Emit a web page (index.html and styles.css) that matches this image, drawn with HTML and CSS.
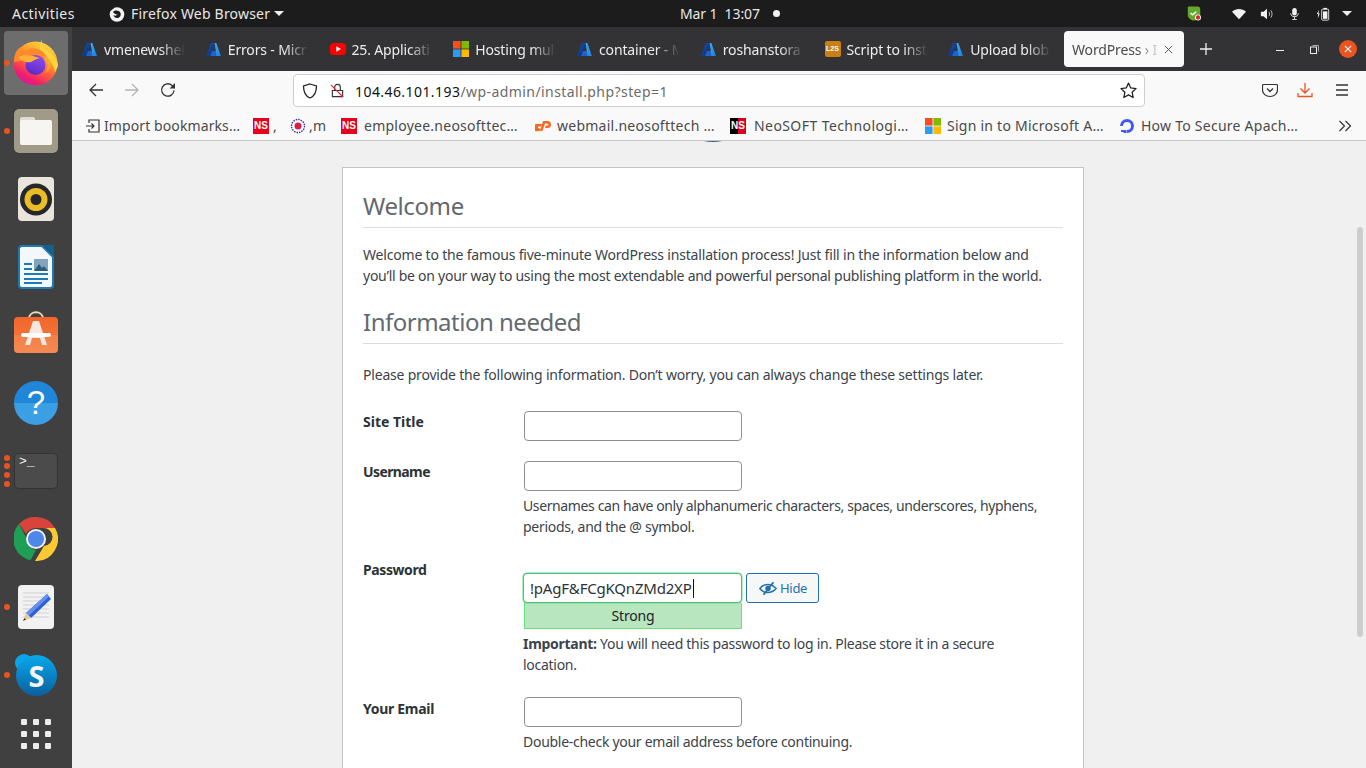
FILE: index.html
```html
<!DOCTYPE html>
<html lang="en">
<head>
<meta charset="utf-8">
<title>WordPress › Installation</title>
<link rel="stylesheet" href="styles.css">
</head>
<body>
<svg class="defs" width="0" height="0" aria-hidden="true">
  <defs>
    <linearGradient id="azg" x1="0" y1="0" x2="1" y2="1"><stop offset="0" stop-color="#1b4fa8"/><stop offset="1" stop-color="#0a2f7a"/></linearGradient>
    <linearGradient id="azh" x1="0" y1="0" x2="1" y2="1"><stop offset="0" stop-color="#3ab4f2"/><stop offset="1" stop-color="#1a7ae0"/></linearGradient>
    <symbol id="azure" viewBox="0 0 16 16">
      <path d="M5 1h5L4.600 15H0z" fill="url(#azg)"/>
      <path d="M6.400 9.600h5.600l3.600 5.400H4.400z" fill="#1f62c9"/>
      <path d="M9.200 1h1.800L16 15h-4.800z" fill="url(#azh)"/>
    </symbol>
    <symbol id="ms" viewBox="0 0 16 16">
      <rect width="7.6" height="7.6" fill="#f25022"/><rect x="8.4" width="7.6" height="7.6" fill="#7fba00"/>
      <rect y="8.4" width="7.6" height="7.6" fill="#2f9bf0"/><rect x="8.4" y="8.4" width="7.6" height="7.6" fill="#ffb900"/>
    </symbol>
  </defs>
</svg>

<header class="topbar">
  <span class="activities">Activities</span>
  <span class="appmenu">
    <svg class="ff-mono" viewBox="0 0 16 16"><circle cx="8" cy="8.500" r="7.300" fill="#f2f2f2"/><path d="M4 6C6 4 10 4 11.500 7c1 3-1.500 5-3.500 5-2 0-3.500-1.500-3.500-3 1.500 1 3.500 1 4-.5C7 8.500 5.500 8 4 6z" fill="#1c1c1c"/><path d="M1 0h5L4.500 2.500 2 4.500z" fill="#1c1c1c"/></svg>
    <span class="appname">Firefox Web Browser</span>
    <i class="caret-down"></i>
  </span>
  <span class="clock">Mar 1&nbsp;&nbsp;13:07</span>
  <i class="clock-dot"></i>
  <span class="tray">
    <svg class="t-shield" viewBox="0 0 18 18"><path d="M3 1h10a3 3 0 0 1 3 3v6c0 3-3 6-7 7-3.500-.5-7-3-7-7V2z" fill="#64a82c"/><path d="M5 8.500l2.500 2 4-3.500" stroke="#fff" stroke-width="1.600" fill="none"/><circle cx="13.500" cy="13.500" r="3.400" fill="#fff"/><circle cx="13.500" cy="13.500" r="2.400" fill="#e0202a"/></svg>
    <svg class="t-wifi" viewBox="0 0 16 12"><path d="M0 3.500C4.500-.7 11.500-.7 16 3.500L8 12z" fill="#f2f2f2"/></svg>
    <svg class="t-vol" viewBox="0 0 16 14"><path d="M1 4.500h3L8 1v12L4 9.500H1z" fill="#f2f2f2"/><path d="M10.200 4.500c1 1.500 1 3.500 0 5M12.400 2.800c1.800 2.500 1.800 5.900 0 8.400" stroke="#bdbdbd" stroke-width="1.100" fill="none"/></svg>
    <svg class="t-mic" viewBox="0 0 12 16"><rect x="3" y="0" width="6" height="10" rx="3" fill="#f2f2f2"/><path d="M1 7c0 3 2 4.500 5 4.500S11 10 11 7M6 11.500V15M3 15.300h6" stroke="#f2f2f2" stroke-width="1.200" fill="none"/></svg>
    <svg class="t-bat" viewBox="0 0 16 16"><path d="M3.300 3L1 8h1.500L2 13l2.300-5.500H2.900z" fill="#f2f2f2"/><rect x="6.500" y="2.500" width="8" height="12.500" rx="1" fill="none" stroke="#f2f2f2"/><rect x="8.500" y="1" width="4" height="1.500" fill="#f2f2f2"/><rect x="8" y="5" width="5" height="8.500" fill="#f2f2f2"/></svg>
    <i class="caret-down tray-caret"></i>
  </span>
</header>

<div class="desktop">
  <nav class="dock">
    <div class="dock-item active">
      <i class="run run-one"></i>
      <svg class="i48" viewBox="0 0 48 48">
        <defs>
          <linearGradient id="ffb" x1=".85" y1=".1" x2=".35" y2="1"><stop offset="0" stop-color="#ffd53d"/><stop offset=".35" stop-color="#ff9a2c"/><stop offset=".6" stop-color="#ff5a3c"/><stop offset=".85" stop-color="#f01f6c"/><stop offset="1" stop-color="#d81a9b"/></linearGradient>
          <linearGradient id="ffp" x1=".7" y1="0" x2=".3" y2="1"><stop offset="0" stop-color="#8f4cee"/><stop offset="1" stop-color="#5a2ac8"/></linearGradient>
        </defs>
        <circle cx="23.500" cy="25.500" r="22" fill="url(#ffb)"/>
        <path d="M30 1c-1 7 2 10 7 13 6 5 9 9 9 14l-3 6c-1-8-7-15-14-17-2-5-1-11 1-16z" fill="#ffd53d"/>
        <path d="M2 24C2 16 5 11 9 9c0 3 1 5 3 5 3-3 8-5 13-3 5 1 9 5 11 10L20 21z" fill="#ff8a2c"/>
        <circle cx="23.500" cy="27" r="10" fill="url(#ffp)"/>
        <path d="M6 19c6-3 14-2 22 1-5 1-6 3-9 4-5 1-9-1-13-5z" fill="#ffb03a"/>
        <path d="M31 18c5 5 6 12 2 18 4-3 7-9 5-14-2-2-4-4-7-4z" fill="#ffa82e"/>
      </svg>
    </div>
    <div class="dock-item">
      <i class="run run-one"></i>
      <div class="files"><div class="folder-tab"></div><div class="folder"></div></div>
    </div>
    <div class="dock-item">
      <svg class="rhythm" viewBox="0 0 36 44"><rect width="36" height="44" rx="4" fill="#e9e5da"/><circle cx="18" cy="22.500" r="16" fill="#26262c"/><circle cx="18" cy="22.500" r="11.500" fill="#e9bd24"/><circle cx="18" cy="22.500" r="5.500" fill="#26262c"/></svg>
    </div>
    <div class="dock-item">
      <svg class="writer" viewBox="0 0 36 44"><path d="M3 1h21l11 11v28a3 3 0 0 1-3 3H4a3 3 0 0 1-3-3V3z" fill="#f4f8fb" stroke="#1b7bb3" stroke-width="2"/><path d="M25 0h11v11z" fill="#12618f"/><path d="M6 19h8M6 24h8M6 29h24M6 34h24M6 38h18" stroke="#1b7bb3" stroke-width="2"/><rect x="16" y="14" width="14" height="12" fill="#7fa6bd"/><path d="M16 26l5-7 3 4 2-2 4 5z" fill="#2e5d7c"/></svg>
    </div>
    <div class="dock-item">
      <svg class="bag" viewBox="0 0 44 44">
        <defs><linearGradient id="bagg" x1="0" y1="0" x2="0" y2="1"><stop offset="0" stop-color="#f2662a"/><stop offset=".5" stop-color="#f37238"/><stop offset=".5" stop-color="#f47f46"/><stop offset="1" stop-color="#f48a52"/></linearGradient></defs>
        <path d="M15 9c0-9 14-9 14 0" fill="none" stroke="#e9d9b8" stroke-width="2"/>
        <rect y="7" width="44" height="36" rx="4" fill="url(#bagg)"/>
        <path d="M19 11h6l8 24h-5l-2-7h-8l-2 7h-5z" fill="#f6e8e0"/><rect x="7" y="23" width="30" height="4" rx="2" fill="#fff"/>
      </svg>
    </div>
    <div class="dock-item"><div class="help">?</div></div>
    <div class="dock-item">
      <i class="run run-a"></i><i class="run run-b"></i><i class="run run-c"></i><i class="run run-d"></i>
      <div class="term">&gt;_</div>
    </div>
    <div class="dock-item">
      <svg class="i44" viewBox="0 0 44 44"><path d="M22 0a22 22 0 0 1 19 11H22a11 11 0 0 0-10 6L5 7A22 22 0 0 1 22 0z" fill="#d8443a"/><path d="M5 7l9 17a9 9 0 0 0 8 9l-5.500 10.300A22 22 0 0 1 5 7z" fill="#1f9e56"/><path d="M41 11a22 22 0 0 1-20 33l9-15a9 9 0 0 0-1-18z" fill="#fcc934"/><circle cx="22" cy="22" r="10" fill="#f1f1f1"/><circle cx="22" cy="22" r="8" fill="#4e86ea"/></svg>
    </div>
    <div class="dock-item">
      <i class="run run-one"></i>
      <svg class="rhythm" viewBox="0 0 36 44"><rect width="36" height="44" rx="4" fill="#f2f2f2"/><path d="M5 8h26M5 12h26M5 16h26M5 20h26M5 24h26M5 28h26M5 32h26" stroke="#cfcfcf"/><path d="M29 9l4 5-20 19-5-5z" fill="#2f5fd8"/><path d="M29 9l2 2.500-20 19-3-2.500z" fill="#6590ee"/><path d="M8 28l5 5-8 3z" fill="#edc89a"/><path d="M6.500 33l1.500 1.500-3 1.500z" fill="#333"/></svg>
    </div>
    <div class="dock-item">
      <i class="run run-one"></i>
      <div class="skype"><i class="skype-ear"></i><div class="skype-body">S</div></div>
    </div>
    <div class="dock-item apps">
      <div class="appgrid"><i></i><i></i><i></i><i></i><i></i><i></i><i></i><i></i><i></i></div>
    </div>
  </nav>

  <main class="browser">
    <div class="tabstrip">
      <div class="tab"><svg class="fav az"><use href="#azure"/></svg><span class="tabtext">vmenewshel</span></div>
      <div class="tab"><svg class="fav az"><use href="#azure"/></svg><span class="tabtext">Errors - Micr</span></div>
      <div class="tab"><svg class="fav" viewBox="0 0 16 16"><rect y="2" width="16" height="12" rx="3.500" fill="#f00"/><path d="M6.300 5.300v5.400L11 8z" fill="#fff"/></svg><span class="tabtext">25. Applicati</span></div>
      <div class="tab"><svg class="fav"><use href="#ms"/></svg><span class="tabtext">Hosting mul</span></div>
      <div class="tab"><svg class="fav az"><use href="#azure"/></svg><span class="tabtext">container - M</span></div>
      <div class="tab"><svg class="fav az"><use href="#azure"/></svg><span class="tabtext">roshanstora</span></div>
      <div class="tab"><span class="l2s">L2S</span><span class="tabtext">Script to inst</span></div>
      <div class="tab"><svg class="fav az"><use href="#azure"/></svg><span class="tabtext">Upload blob</span></div>
      <div class="tab-active"><span class="tabtext-active">WordPress › I</span>
        <svg class="tabclose" viewBox="0 0 10 10"><path d="M1 1l8 8M9 1L1 9" stroke="#444" stroke-width="1"/></svg>
      </div>
      <svg class="newtab" viewBox="0 0 12 12"><path d="M6 0v12M0 6h12" stroke="#f0f0f0" stroke-width="1.300"/></svg>
      <div class="winctl">
        <i class="win-min"></i>
        <svg class="win-max" viewBox="0 0 9 9"><rect x=".5" y="2" width="6" height="6.500" fill="none" stroke="#eee"/><path d="M2.500.5h6v6" fill="none" stroke="#aaa"/></svg>
        <div class="win-close"><svg viewBox="0 0 10 10"><path d="M1 1l8 8M9 1L1 9" stroke="#fff" stroke-width="1.400"/></svg></div>
      </div>
    </div>

    <div class="toolbar">
      <svg class="tb tb-back" viewBox="0 0 16 16"><path d="M15 8H2M8 2L2 8l6 6" stroke="#333" stroke-width="1.300" fill="none"/></svg>
      <svg class="tb tb-fwd" viewBox="0 0 16 16"><path d="M1 8h13M8 2l6 6-6 6" stroke="#b4b4b4" stroke-width="1.300" fill="none"/></svg>
      <svg class="tb tb-rel" viewBox="0 0 16 16"><path d="M14 8.500A6.200 6.200 0 1 1 12 3.400L14.500 6" stroke="#333" stroke-width="1.300" fill="none"/><path d="M15 1v5.500H9.500z" fill="#333"/></svg>
      <div class="urlbar">
        <svg class="u-shield" viewBox="0 0 16 16"><path d="M8 1l6.500 2c0 6-1.500 10-6.500 12C3 13 1.500 9 1.500 3z" fill="none" stroke="#222" stroke-width="1.300"/></svg>
        <svg class="u-lock" viewBox="0 0 16 16"><path d="M5 8V4.500a3 3 0 0 1 6 0V8M2.500 8h11v6.500h-11z" fill="none" stroke="#333" stroke-width="1.200"/><path d="M1 2l13 13" stroke="#f0213c" stroke-width="1.300"/></svg>
        <span class="u-host">104.46.101.193</span><span class="u-path">/wp-admin/install.php?step=1</span>
        <svg class="u-star" viewBox="0 0 16 16"><path d="M8 1l2.100 4.600 5 .6-3.700 3.400 1 5L8 12.100l-4.400 2.500 1-5L.9 6.200l5-.6z" fill="none" stroke="#222" stroke-width="1.200" stroke-linejoin="round"/></svg>
      </div>
      <svg class="tb tb-pocket" viewBox="0 0 16 16"><path d="M1.500 2.500h13a1 1 0 0 1 1 1V8a7.500 6.500 0 0 1-15 0V3.500a1 1 0 0 1 1-1z" fill="none" stroke="#333" stroke-width="1.200"/><path d="M5 6.500l3 3 3-3" fill="none" stroke="#333" stroke-width="1.300"/></svg>
      <svg class="tb tb-dl" viewBox="0 0 16 16"><path d="M8 1v10M3.500 6.500L8 11l4.500-4.500M1 11v3.500h14V11" fill="none" stroke="#e95420" stroke-width="1.300"/></svg>
      <svg class="tb tb-menu" viewBox="0 0 14 12"><path d="M1 1h12M1 6h12M1 11h12" stroke="#333" stroke-width="1.300"/></svg>
    </div>

    <div class="bookmarks">
      <div class="bm b1"><svg class="bfav" viewBox="0 0 16 16"><path d="M4 5V2h10v12H4v-3M1 8h8M6.500 5.500L9 8l-2.500 2.500" fill="none" stroke="#333" stroke-width="1.200"/></svg><span class="bt">Import bookmarks…</span></div>
      <div class="bm b2"><span class="ns">NS</span><span class="bt">,</span></div>
      <div class="bm b3"><svg class="bfav" viewBox="0 0 16 16"><circle cx="8" cy="8" r="6.500" fill="#fff" stroke="#3b2aa8" stroke-width="1.400" stroke-dasharray="1.500 1"/><circle cx="8" cy="8" r="3.500" fill="#d81f4a"/></svg><span class="bt">,m</span></div>
      <div class="bm b4"><span class="ns">NS</span><span class="bt">employee.neosofttec…</span></div>
      <div class="bm b5"><svg class="bfav" viewBox="0 0 16 16"><path d="M1 6h6l-1 2.500H4a1 1 0 0 0 0 2h1.500L4.700 13H3.500a3.500 3.500 0 0 1-2.500-7zM8 3h4.500a3.500 3.500 0 0 1 0 7H10l.8-2.500h1.500a1 1 0 0 0 0-2H10L7.500 13H5z" fill="#f56b21"/></svg><span class="bt">webmail.neosofttech …</span></div>
      <div class="bm b6"><span class="ns ns-dark">NS</span><span class="bt">NeoSOFT Technologi…</span></div>
      <div class="bm b7"><svg class="bfav"><use href="#ms"/></svg><span class="bt">Sign in to Microsoft A…</span></div>
      <div class="bm b8"><svg class="bfav" viewBox="0 0 16 16"><path d="M8 15v-3a4 4 0 1 0-4-4H1a7 7 0 1 1 7 7z" fill="#3a5cf5"/><path d="M4.500 12h3v3h-3zM2 14h2.500v-2H2z" fill="#3a5cf5"/></svg><span class="bt">How To Secure Apach…</span></div>
      <svg class="bmore" viewBox="0 0 14 12"><path d="M1.500 1l5 5-5 5M7.500 1l5 5-5 5" fill="none" stroke="#333" stroke-width="1.200"/></svg>
    </div>

    <div class="page">
      <i class="wp-logo"></i>
      <section class="card">
        <h1 class="heading heading-one">Welcome</h1>
        <p class="intro"><span class="line-a">Welcome to the famous five-minute WordPress installation process! Just fill in the information below and</span><br><span class="line-b">you’ll be on your way to using the most extendable and powerful personal publishing platform in the world.</span></p>
        <h2 class="heading heading-two">Information needed</h2>
        <p class="please">Please provide the following information. Don’t worry, you can always change these settings later.</p>

        <form class="form">
          <div class="row">
            <label class="label label-site">Site Title</label>
            <div class="field"><input class="input" type="text"></div>
          </div>
          <div class="row row-user">
            <label class="label label-user">Username</label>
            <div class="field">
              <input class="input" type="text">
              <p class="desc"><span class="line-user">Usernames can have only alphanumeric characters, spaces, underscores, hyphens,</span><br>periods, and the @ symbol.</p>
            </div>
          </div>
          <div class="row row-pass">
            <label class="label label-pass">Password</label>
            <div class="field field-pass">
              <div class="pass-line">
                <div class="pass-box">!pAgF&amp;FCgKQnZMd2XP<i class="text-caret"></i></div>
                <button class="hide" type="button">
                  <svg class="eye" viewBox="0 0 20 16"><path d="M1 8c4-6 13-6 18 0-5 6-14 6-18 0z" fill="none" stroke="#2271b1" stroke-width="1.600"/><circle cx="10" cy="8" r="3" fill="#2271b1"/><path d="M5 15L16 1" stroke="#2271b1" stroke-width="2"/></svg>
                  <span>Hide</span>
                </button>
              </div>
              <div class="strength">Strong</div>
              <p class="desc"><strong>Important:</strong> You will need this password to log in. Please store it in a secure<br>location.</p>
            </div>
          </div>
          <div class="row row-email">
            <label class="label label-email">Your Email</label>
            <div class="field">
              <input class="input" type="text">
              <p class="desc">Double-check your email address before continuing.</p>
            </div>
          </div>
        </form>
      </section>
      <i class="scrollthumb"></i>
    </div>
  </main>
</div>
</body>
</html>
```

FILE: styles.css
```css
* { box-sizing: border-box; }
html, body { margin: 0; height: 100%; }
body {
  width: 1366px; height: 768px; overflow: hidden;
  display: flex; flex-direction: column;
  font-family: "Noto Sans", "Open Sans", sans-serif;
  font-size: 14px; background: #404040;
}
.defs { position: absolute; }
i { display: block; font-style: normal; }
svg { display: block; flex: none; }

/* top bar */
.topbar {
  height: 27px; flex: none; background: #1c1c1c; color: #e8e8e8;
  display: flex; align-items: center; font-size: 14px; letter-spacing: -.1px;
}
.activities { margin-left: 12px; width: 97px; letter-spacing: .45px; }
.appmenu { display: flex; align-items: center; width: 175px; }
.ff-mono { width: 16px; height: 16px; margin-right: 6px; }
.appname { width: 143px; white-space: nowrap; letter-spacing: .2px; }
.caret-down { width: 0; height: 0; border-left: 5px solid transparent; border-right: 5px solid transparent; border-top: 5px solid #eee; }
.clock { margin-left: 396px; width: 93px; white-space: nowrap; }
.clock-dot { width: 7px; height: 7px; border-radius: 50%; background: #f2f2f2; }
.tray { margin-left: 406px; display: flex; align-items: center; }
.t-shield { width: 16px; height: 17px; margin-right: 30px; }
.t-wifi { width: 14px; height: 12px; margin-right: 14px; }
.t-vol { width: 14px; height: 14px; margin-right: 16px; }
.t-mic { width: 9px; height: 16px; margin-right: 17px; }
.t-bat { width: 14px; height: 16px; margin-right: 12px; }

/* desktop */
.desktop { flex: 1; display: flex; min-height: 0; }
.dock { width: 72px; flex: none; background: #404040; display: flex; flex-direction: column; padding-top: 2px; }
.dock-item { height: 68px; flex: none; display: flex; align-items: center; justify-content: center; position: relative; }
.dock-item.active::before { content: ""; position: absolute; left: 4px; top: 2px; width: 64px; height: 64px; border-radius: 4px; background: #6d6d6d; }
.dock-item > * { position: relative; }
.dock-item.apps { height: 50px; }
.run { position: absolute; left: 4px; width: 6px; height: 6px; border-radius: 50%; background: #e95420; }
.dock-item > .run { position: absolute; }
.run-one { top: 31px; }
.run-a { top: 18px; } .run-b { top: 26px; } .run-c { top: 35px; } .run-d { top: 44px; }
.i48 { width: 48px; height: 48px; margin-left: -1px; margin-top: -2px; }
.i44 { width: 44px; height: 44px; }
.files { width: 44px; height: 44px; background: #a09b89; border-radius: 5px; box-shadow: 0 0 1px #222; }
.folder-tab { position: absolute; left: 6px; top: 8px; width: 15px; height: 8px; background: #dfdcd3; border-radius: 2px 2px 0 0; }
.folder { position: absolute; left: 6px; top: 11px; width: 32px; height: 25px; background: #f7f5f2; border-radius: 2px; }
.rhythm { width: 36px; height: 44px; }
.writer { width: 36px; height: 44px; }
.bag { width: 44px; height: 44px; margin-top: -6px; }
.help {
  width: 44px; height: 44px; border-radius: 50%;
  background: linear-gradient(#1f86d9 0 50%, #3b9fe3 50% 100%);
  color: #fff; font-size: 33px; line-height: 44px; text-align: center; font-family: "Liberation Sans", sans-serif;
}
.term {
  width: 44px; height: 36px; background: #4b4b4b; border: 1px solid #333; border-radius: 5px;
  color: #f2f2f2; font: 13px/16px "Liberation Mono", monospace; padding: 0 0 0 4px;
}
.skype { width: 42px; height: 42px; }
.skype-ear { position: absolute; left: 0; top: 0; width: 18px; height: 18px; border-radius: 50%; background: #0aa5e8; }
.skype-body {
  position: absolute; left: 1px; top: 1px; width: 41px; height: 41px; border-radius: 50%;
  background: linear-gradient(#08a9ec, #0b5f9f); color: #f4f4f4;
  font: bold 29px/41px "Open Sans", sans-serif; text-align: center;
}
.appgrid { display: grid; grid-template-columns: repeat(3, 6px); gap: 6px; }
.appgrid i { width: 6px; height: 6px; background: #ececec; border-radius: 1px; }

/* browser */
.browser { flex: 1; min-width: 0; display: flex; flex-direction: column; }
.tabstrip { height: 44px; flex: none; background: #333234; display: flex; align-items: center; padding-left: 1px; position: relative; }
.tab { width: 123.75px; flex: none; height: 36px; display: flex; align-items: center; padding-left: 10px; color: #ececec; letter-spacing: -.15px; }
.fav { width: 16px; height: 16px; flex: none; margin-left: -1px; margin-right: 6px; }
.fav.az { width: 15px; height: 15px; margin-right: 7px; }
.tabtext {
  display: block; width: 81px; overflow: hidden; white-space: nowrap;
  -webkit-mask-image: linear-gradient(90deg, #000 70%, transparent 100%);
  mask-image: linear-gradient(90deg, #000 70%, transparent 100%);
}
.l2s { width: 16px; height: 16px; flex: none; margin-left: -1px; margin-right: 6px; border-radius: 2px; background: #c97f12; color: #fff; font: bold 7px/16px "Liberation Sans", sans-serif; text-align: center; letter-spacing: 0; }
.tab-active {
  margin-left: 1px; width: 120px; height: 36px; flex: none; background: #f9f9fa; border-radius: 4px;
  display: flex; align-items: center; padding-left: 8px; color: #4a4a4a; letter-spacing: -.15px; position: relative;
}
.tabtext-active {
  display: block; width: 90px; overflow: hidden; white-space: nowrap;
  -webkit-mask-image: linear-gradient(90deg, #000 72%, transparent 100%);
  mask-image: linear-gradient(90deg, #000 72%, transparent 100%);
}
.tabclose { position: absolute; left: 100px; top: 14px; width: 9px; height: 9px; }
.newtab { width: 12px; height: 12px; margin-left: 16px; }
.winctl { display: flex; align-items: center; margin-left: 64px; }
.win-min { width: 8px; height: 1px; background: #eee; margin-top: 2px; }
.win-max { width: 9px; height: 9px; margin-left: 26px; }
.win-close { width: 18px; height: 18px; border-radius: 50%; background: #e95420; margin-left: 20px; display: flex; align-items: center; justify-content: center; }
.win-close svg { width: 8px; height: 8px; }

.toolbar { height: 37px; flex: none; background: #f9f9fa; display: flex; align-items: center; padding-left: 16px; }
.tb { width: 16px; height: 16px; }
.tb-fwd { margin-left: 20px; }
.tb-rel { margin-left: 20px; }
.urlbar {
  margin-left: 117px; width: 852px; height: 33px; margin-top: 2px; background: #fff; border: 1px solid #cfcfcf; border-radius: 4px;
  display: flex; align-items: center; padding: 2px 0 0 8px; font-size: 14px; letter-spacing: .43px; position: relative; white-space: nowrap;
}
.u-shield { width: 16px; height: 16px; margin-top: -2px; }
.u-lock { width: 15px; height: 15px; margin-left: 12px; margin-top: -2px; }
.u-host { color: #111; margin-left: 10px; }
.u-path { color: #6b6b6b; }
.u-star { position: absolute; right: 7px; top: 7px; width: 17px; height: 17px; }
.tb-pocket { margin-left: 117px; }
.tb-dl { margin-left: 19px; }
.tb-menu { margin-left: 22px; width: 14px; height: 12px; }

.bookmarks {
  height: 33px; flex: none; background: #f9f9fa; border-bottom: 1px solid #c6c6c6;
  display: flex; align-items: center; padding: 3px 0 0 13px; color: #4a4a4a; letter-spacing: .25px; white-space: nowrap;
}
.bm { display: flex; align-items: center; flex: none; overflow: hidden; }
.b1 { width: 168px; letter-spacing: .1px; } .b2 { width: 37px; } .b3 { width: 51px; } .b4 { width: 194px; }
.b5 { width: 195px; } .b6 { width: 195px; letter-spacing: .42px; } .b7 { width: 194px; } .b8 { width: 219px; }
.bfav { width: 16px; height: 16px; margin-right: 6px; }
.b1 .bfav { margin-right: 3px; }
.b3 .bfav { margin-right: 3px; }
.ns { width: 16px; height: 16px; flex: none; margin-right: 7px; background: #e8001c; color: #fff; font: bold 10px/16px "Liberation Sans", sans-serif; text-align: center; letter-spacing: 0; }
.b2 .ns { margin-right: 4px; }
.b6 .ns { margin-right: 8px; }
.ns-dark { background: linear-gradient(90deg, #000 50%, #d8001c 50%); }
.bmore { width: 14px; height: 12px; }

/* page */
.page { flex: 1; min-height: 0; position: relative; overflow: hidden; background: #f0f0f1; padding: 26px 282px 0 270px; color: #3c434a; }
.wp-logo { position: absolute; left: 599px; top: -83px; width: 84px; height: 84px; border-radius: 50%; background: #33617f; }
.scrollthumb { position: absolute; right: 3px; top: 86px; width: 6px; height: 410px; border-radius: 3px; background: #cdcdcd; }
.card { background: #fff; border: 1px solid #c3c4c7; padding: 0 20px; min-height: 700px; }
.heading { margin: 22px 0 0; height: 38px; border-bottom: 1px solid #dcdcde; color: #646970; font-size: 24px; font-weight: 400; line-height: 32px; }
.heading-one { letter-spacing: -.4px; }
.heading-two { margin-top: 20px; letter-spacing: -.5px; }
.intro, .please, .desc { margin: 0; line-height: 21px; white-space: nowrap; letter-spacing: -.28px; }
.line-a { letter-spacing: -.185px; }
.line-b { letter-spacing: -.26px; }
.line-user { letter-spacing: -.38px; }
.intro { margin-top: 16px; }
.please { margin-top: 20px; letter-spacing: -.2px; }
.form { margin-top: 26px; }
.row { display: flex; }
.row-user { margin-top: 20px; }
.row-pass { margin-top: 22px; }
.row-email { margin-top: 22px; }
.label { width: 160px; flex: none; font-weight: 700; line-height: 21px; color: #2c3338; letter-spacing: -.3px; }
.label-site { letter-spacing: 0; }
.label-user { letter-spacing: -.6px; }
.label-pass { letter-spacing: -.4px; }
.label-email { padding-top: 1px; }
.field { flex: 1; min-width: 0; }
.field-pass { padding-top: 14px; }
.input { display: block; margin: 0 0 0 1px; width: 218px; height: 30px; border: 1px solid #8c8f94; border-radius: 4px; background: #fff; padding: 0 6px; }
.desc { margin-top: 4px; }
.pass-line { display: flex; gap: 4px; }
.pass-box {
  width: 219px; height: 30px; border: 1px solid #4fbc80; border-radius: 4px; background: #fff;
  box-shadow: 0 0 0 .5px #68de7c;
  font-size: 15px; line-height: 28px; padding-left: 6px; color: #2c3338; letter-spacing: -.2px; white-space: nowrap; display: flex; align-items: center;
}
.text-caret { width: 1px; height: 19px; background: #111; margin-left: 1px; }
.hide {
  width: 73px; height: 30px; border: 1px solid #2271b1; border-radius: 3px; background: #f6f7f7; color: #2271b1;
  display: flex; align-items: center; padding: 0 0 0 12px; font: 13px "Noto Sans", sans-serif; letter-spacing: -.3px;
}
.eye { width: 18px; height: 15px; margin-right: 3px; }
.strength {
  margin-left: 1px; width: 218px; height: 26px; background: #b8e6bf; border: 1px solid #68de7c; border-top: 0;
  text-align: center; line-height: 25px; color: #1d2327; letter-spacing: -.2px;
}
strong { font-weight: 700; }
```
